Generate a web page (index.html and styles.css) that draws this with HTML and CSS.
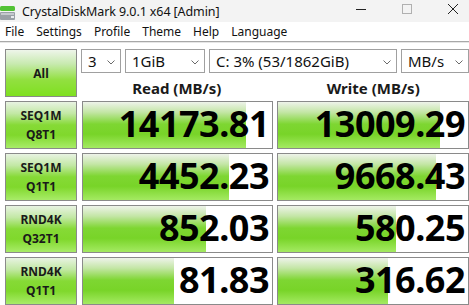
FILE: index.html
```html
<!DOCTYPE html>
<html>
<head>
<meta charset="utf-8">
<link rel="stylesheet" href="styles.css">
</head>
<body>
<div class="window">
  <div class="titlebar">
    <svg class="appicon" width="16" height="16" viewBox="0 0 16 16">
      <rect x="0" y="2" width="15" height="5" rx="1.5" fill="#52c234"/>
      <rect x="0" y="8" width="15" height="8" rx="1" fill="#9aa0a6"/>
      <rect x="1" y="9" width="13" height="2" fill="#c5c9cd"/>
      <rect x="11" y="12" width="3" height="2" fill="#e8eaec"/>
    </svg>
    <span class="title">CrystalDiskMark 9.0.1 x64 [Admin]</span>
    <div class="controls">
      <svg class="ctl" width="46" height="22" viewBox="0 0 46 22"><line x1="18" y1="9.5" x2="28" y2="9.5" stroke="#222" stroke-width="1"/></svg>
      <svg class="ctl" width="46" height="22" viewBox="0 0 46 22"><rect x="18.5" y="4.5" width="9" height="9" fill="none" stroke="#b0b0b0" stroke-width="1"/></svg>
      <svg class="ctl" width="46" height="22" viewBox="0 0 46 22"><path d="M18 4 L28 14 M28 4 L18 14" stroke="#222" stroke-width="1"/></svg>
    </div>
  </div>
  <div class="menubar">
    <span class="mi">File</span>
    <span class="mi">Settings</span>
    <span class="mi">Profile</span>
    <span class="mi">Theme</span>
    <span class="mi">Help</span>
    <span class="mi">Language</span>
  </div>
  <div class="main">
    <div class="grid">
      <div class="allbtn">All</div>
      <div class="topright">
        <div class="selects">
          <div class="sel s1"><span>3</span><svg class="chev" width="8" height="5" viewBox="0 0 8 5"><polyline points="0.5,0.5 4,4 7.5,0.5" fill="none" stroke="#6a6a6a" stroke-width="1"/></svg></div>
          <div class="sel s2"><span>1GiB</span><svg class="chev" width="8" height="5" viewBox="0 0 8 5"><polyline points="0.5,0.5 4,4 7.5,0.5" fill="none" stroke="#6a6a6a" stroke-width="1"/></svg></div>
          <div class="sel s3"><span>C: 3% (53/1862GiB)</span><svg class="chev" width="8" height="5" viewBox="0 0 8 5"><polyline points="0.5,0.5 4,4 7.5,0.5" fill="none" stroke="#6a6a6a" stroke-width="1"/></svg></div>
          <div class="sel s4"><span>MB/s</span><svg class="chev" width="8" height="5" viewBox="0 0 8 5"><polyline points="0.5,0.5 4,4 7.5,0.5" fill="none" stroke="#6a6a6a" stroke-width="1"/></svg></div>
        </div>
        <div class="headers">
          <div class="hdr">Read (MB/s)</div>
          <div class="hdr">Write (MB/s)</div>
        </div>
      </div>

      <div class="label">SEQ1M<br>Q8T1</div>
      <div class="res"><div class="bar" style="width:86%"></div><span class="val">14173.81</span></div>
      <div class="res"><div class="bar" style="width:85%"></div><span class="val">13009.29</span></div>

      <div class="label">SEQ1M<br>Q1T1</div>
      <div class="res"><div class="bar" style="width:77%"></div><span class="val">4452.23</span></div>
      <div class="res"><div class="bar" style="width:83%"></div><span class="val">9668.43</span></div>

      <div class="label">RND4K<br>Q32T1</div>
      <div class="res"><div class="bar" style="width:65%"></div><span class="val">852.03</span></div>
      <div class="res"><div class="bar" style="width:62%"></div><span class="val">580.25</span></div>

      <div class="label">RND4K<br>Q1T1</div>
      <div class="res"><div class="bar" style="width:48%"></div><span class="val">81.83</span></div>
      <div class="res"><div class="bar" style="width:58%"></div><span class="val">316.62</span></div>
    </div>
  </div>
</div>
</body>
</html>
```
FILE: styles.css
```css
html, body {
  margin: 0;
  padding: 0;
  background: #ffffff;
  overflow: hidden;
}
.window {
  width: 469px;
  height: 305px;
  font-family: "Noto Sans", "Open Sans", sans-serif;
  color: #000;
}
.titlebar {
  height: 22px;
  background: #f3f3f3;
  display: flex;
  align-items: center;
}
.appicon {
  margin-top: 1px;
}
.title {
  margin-left: 6px;
  font-size: 12.5px;
  color: #111;
  letter-spacing: -0.1px;
}
.controls {
  margin-left: auto;
  display: flex;
  margin-right: -7px;
}
.ctl {
  display: block;
}
.menubar {
  height: 19px;
  background: #fff;
  display: flex;
  align-items: center;
  padding-left: 5px;
  border-bottom: 1px solid #a8a8a8;
  box-shadow: 0 1px 0 #e6e6e6;
}
.mi {
  font-size: 12px;
  margin-right: 12px;
  color: #111;
}
.main {
  padding: 7px 0 0 5px;
}
.grid {
  display: grid;
  grid-template-columns: 72px 192px 192px;
  grid-auto-rows: 48px;
  column-gap: 4px;
  row-gap: 4px;
}
.allbtn {
  grid-row: 1;
  grid-column: 1;
  height: 48px;
  box-sizing: border-box;
  border: 1px solid #8a8a8a;
  background: linear-gradient(to bottom, #eef5ea 0%, #c8eab0 30%, #92e040 65%, #7fe020 100%);
  display: flex;
  align-items: center;
  justify-content: center;
  font-weight: bold;
  font-size: 12px;
  color: #1a1a1a;
}
.topright {
  grid-row: 1;
  grid-column: 2 / 4;
  display: flex;
  flex-direction: column;
}
.selects {
  display: flex;
  gap: 4px;
  height: 24px;
}
.sel {
  box-sizing: border-box;
  height: 24px;
  border: 1px solid #a0a0a0;
  background: #fff;
  display: flex;
  align-items: center;
  justify-content: space-between;
  padding: 0 5px 0 6px;
  font-size: 15px;
  color: #111;
}
.chev {
  display: block;
  margin-top: 3px;
}
.s1 { width: 40px; }
.s2 { width: 80px; }
.s3 { width: 188px; }
.s4 { width: 68px; }
.headers {
  display: flex;
  gap: 5px;
  height: 24px;
}
.hdr {
  width: 192px;
  text-align: center;
  font-weight: bold;
  font-size: 15px;
  line-height: 31px;
  color: #1a1a1a;
}
.label {
  box-sizing: border-box;
  border: 1px solid #8a8a8a;
  background: linear-gradient(to bottom, #e8f3e2 0%, #c2e8a4 25%, #86da36 50%, #80d82c 72%, #a8ec68 100%);
  display: flex;
  align-items: center;
  justify-content: center;
  text-align: center;
  font-weight: bold;
  font-size: 12px;
  line-height: 19px;
  color: #1a1a1a;
}
.res {
  position: relative;
  box-sizing: border-box;
  border: 1px solid #8a8a8a;
  background: #fff;
  display: flex;
  align-items: center;
  justify-content: flex-end;
}
.res:nth-child(3n+1) {
  margin-left: 1px;
}
.bar {
  position: absolute;
  left: 0;
  top: 0;
  bottom: 0;
  background: linear-gradient(to bottom, #eef3ea 0%, #c4e6a6 22%, #7ed632 48%, #78d428 70%, #a4ea62 100%);
}
.val {
  position: relative;
  font-weight: bold;
  font-size: 36px;
  line-height: 40px;
  padding-right: 3px;
  padding-bottom: 3px;
  letter-spacing: -0.5px;
}
```
